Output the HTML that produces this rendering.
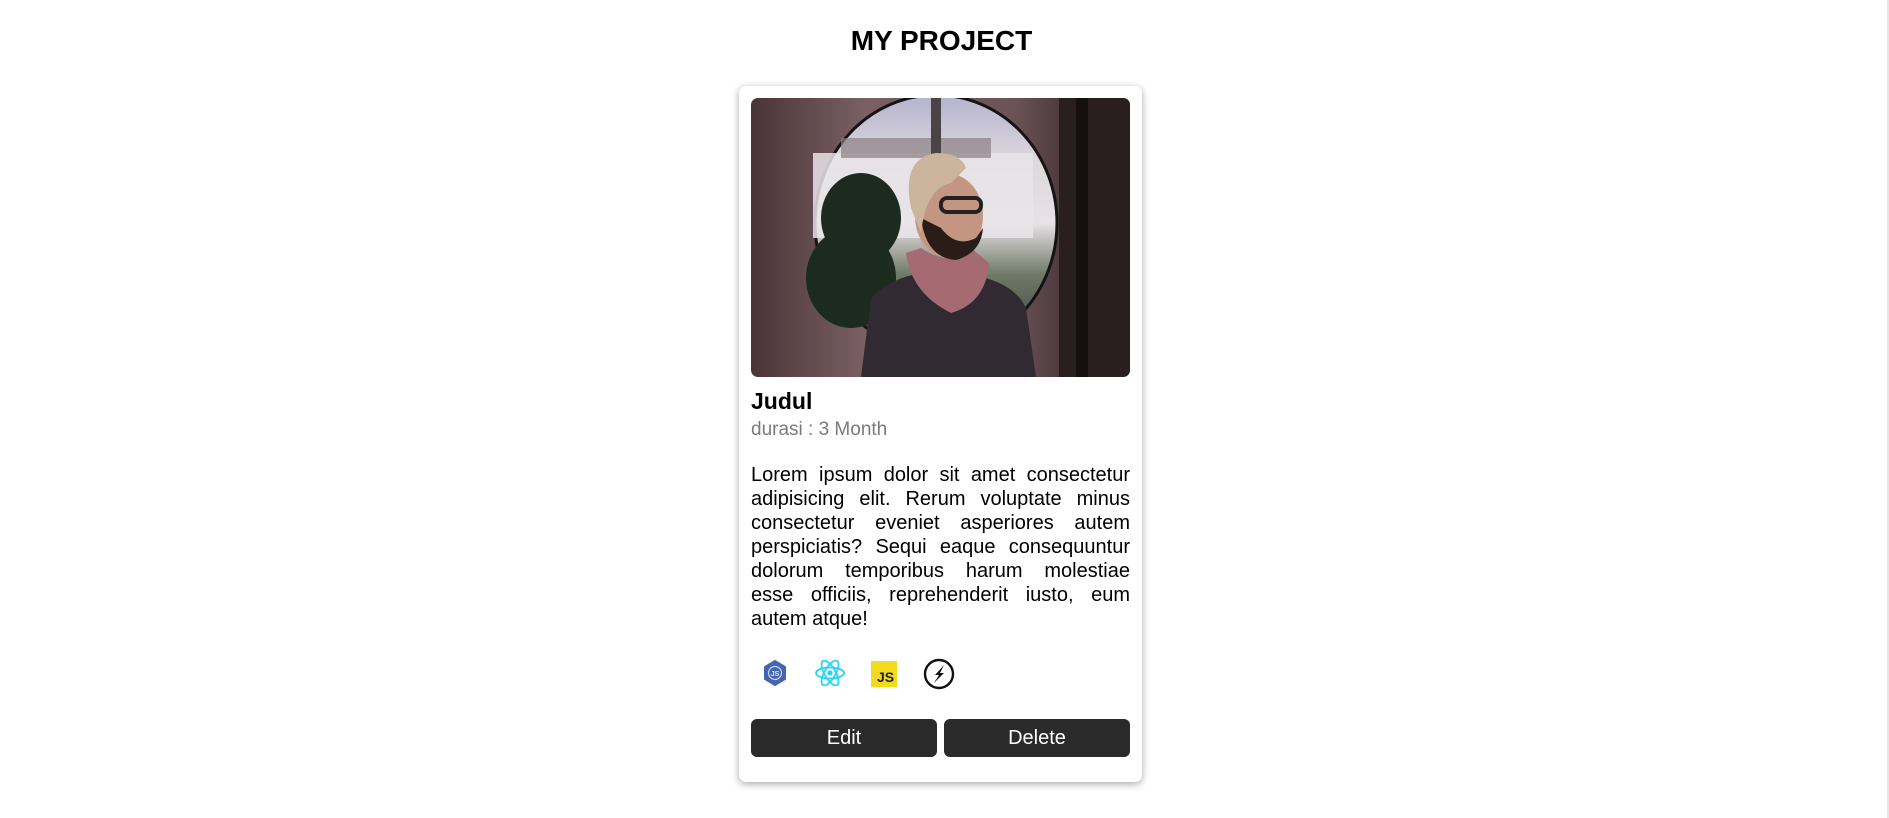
<!DOCTYPE html>
<html><head><meta charset="utf-8"><style>
html,body{margin:0;padding:0;background:#fff;width:1889px;height:818px;overflow:hidden;font-family:"Liberation Sans",Arial,sans-serif}
.sb{position:absolute;left:1887px;top:0;width:2px;height:818px;background:#e6e6e6}
h1{position:absolute;left:0;width:1883px;top:23px;margin:0;text-align:center;font-size:28px;font-weight:bold;line-height:36px;color:#000}
.card{position:absolute;left:739px;top:86px;width:403px;height:696px;background:#fff;border-radius:7px;box-shadow:0 2px 8px rgba(0,0,0,.35)}
.img{position:absolute;left:12px;top:12px;width:379px;height:279px;border-radius:7px;overflow:hidden}
.judul{position:absolute;left:12px;top:300px;font-size:23px;font-weight:bold;color:#000;line-height:30px}
.dur{position:absolute;left:12px;top:332px;font-size:19px;color:#7a7a7a;line-height:24px}
.p{position:absolute;left:12px;top:377px;width:379px;font-size:20px;line-height:24px;color:#000}
.p div{text-align:justify;text-align-last:justify;white-space:nowrap}
.p div.l{text-align-last:left}
.ic{position:absolute;top:574px}
.btn{position:absolute;top:633px;width:186px;height:38px;background:#2b2a2a;border-radius:6px;color:#fff;font-size:20px;line-height:38px;text-align:center}
</style></head><body>
<div class="sb"></div>
<h1>MY PROJECT</h1>
<div class="card">
<div class="img">
<svg width="379" height="279" viewBox="0 0 379 279">
<defs>
<linearGradient id="bg" x1="0" x2="1"><stop offset="0" stop-color="#4a3336"/><stop offset=".3" stop-color="#7a6064"/><stop offset=".7" stop-color="#6a5256"/><stop offset="1" stop-color="#1f1718"/></linearGradient>
<linearGradient id="sky" x1="0" y1="0" x2="0" y2="1"><stop offset="0" stop-color="#b5b3cf"/><stop offset=".25" stop-color="#ddd6dc"/><stop offset=".5" stop-color="#e8e2e6"/><stop offset=".7" stop-color="#6f7a68"/><stop offset="1" stop-color="#3a3a38"/></linearGradient>
</defs>
<rect width="379" height="279" fill="url(#bg)"/>
<rect x="308" y="0" width="71" height="279" fill="#2a1f20"/>
<rect x="325" y="0" width="12" height="279" fill="#150f10"/>
<ellipse cx="185" cy="125" rx="121" ry="128" fill="url(#sky)" stroke="#141414" stroke-width="3"/>
<rect x="62" y="55" width="220" height="85" fill="#e9e4e8" opacity=".85"/>
<rect x="90" y="40" width="150" height="20" fill="#8a7f82" opacity=".7"/>
<rect x="180" y="0" width="10" height="60" fill="#4a4446"/>
<ellipse cx="110" cy="120" rx="40" ry="45" fill="#1d2a20"/>
<ellipse cx="100" cy="180" rx="45" ry="50" fill="#1b2b1d"/>
<path d="M110 279 L120 200 Q150 170 200 175 Q260 178 275 210 L285 279Z" fill="#322a33"/>
<path d="M155 155 Q160 195 200 215 Q235 205 238 165 L220 150 Q200 170 170 150Z" fill="#a66a73"/>
<ellipse cx="198" cy="118" rx="34" ry="42" fill="#c49580"/>
<path d="M170 120 Q175 160 205 162 Q230 155 232 130 L225 140 Q205 150 190 130Z" fill="#2a1c18"/>
<path d="M160 110 Q150 60 185 55 Q210 55 215 70 L200 85 Q175 90 170 135Z" fill="#cbb59c"/>
<rect x="190" y="100" width="40" height="14" rx="6" fill="none" stroke="#222" stroke-width="4"/>
</svg>
</div>
<div class="judul">Judul</div>
<div class="dur">durasi : 3 Month</div>
<div class="p">
<div>Lorem ipsum dolor sit amet consectetur</div>
<div>adipisicing elit. Rerum voluptate minus</div>
<div>consectetur eveniet asperiores autem</div>
<div>perspiciatis? Sequi eaque consequuntur</div>
<div>dolorum temporibus harum molestiae</div>
<div>esse officiis, reprehenderit iusto, eum</div>
<div class="l">autem atque!</div>
</div>
<svg class="ic" style="left:24px" width="24" height="26" viewBox="0 0 24 26"><path d="M12 1 L22 7 L22 19 L12 25 L2 19 L2 7Z" fill="#4466b0" stroke="#4466b0" stroke-width="2" stroke-linejoin="round"/><circle cx="12" cy="13" r="6.5" fill="none" stroke="#c9d3ee" stroke-width="1.2"/><text x="12" y="16" font-size="7" fill="#dfe6f6" text-anchor="middle" font-family="Liberation Sans" font-weight="bold">JS</text></svg>
<svg class="ic" style="left:76px" width="30" height="26" viewBox="0 0 30 26"><g fill="none" stroke="#25d4f7" stroke-width="1.8"><ellipse cx="15" cy="13" rx="14" ry="5.5"/><ellipse cx="15" cy="13" rx="14" ry="5.5" transform="rotate(60 15 13)"/><ellipse cx="15" cy="13" rx="14" ry="5.5" transform="rotate(-60 15 13)"/></g><circle cx="15" cy="13" r="2.6" fill="#25d4f7"/></svg>
<div class="ic" style="left:132px;top:575px;width:26px;height:26px;background:#f2da1d"><span style="position:absolute;left:6px;top:8px;font-size:14px;font-weight:bold;color:#222;line-height:16px">JS</span></div>
<svg class="ic" style="left:184px;top:572px" width="32" height="32" viewBox="0 0 32 32"><circle cx="16" cy="16" r="14" fill="none" stroke="#111" stroke-width="2.4"/><path d="M21 7 L12 17 L16 17 L11 25 L21 15 L17 15Z" fill="#111"/></svg>
<div class="btn" style="left:12px">Edit</div>
<div class="btn" style="left:205px">Delete</div>
</div>
</body></html>
